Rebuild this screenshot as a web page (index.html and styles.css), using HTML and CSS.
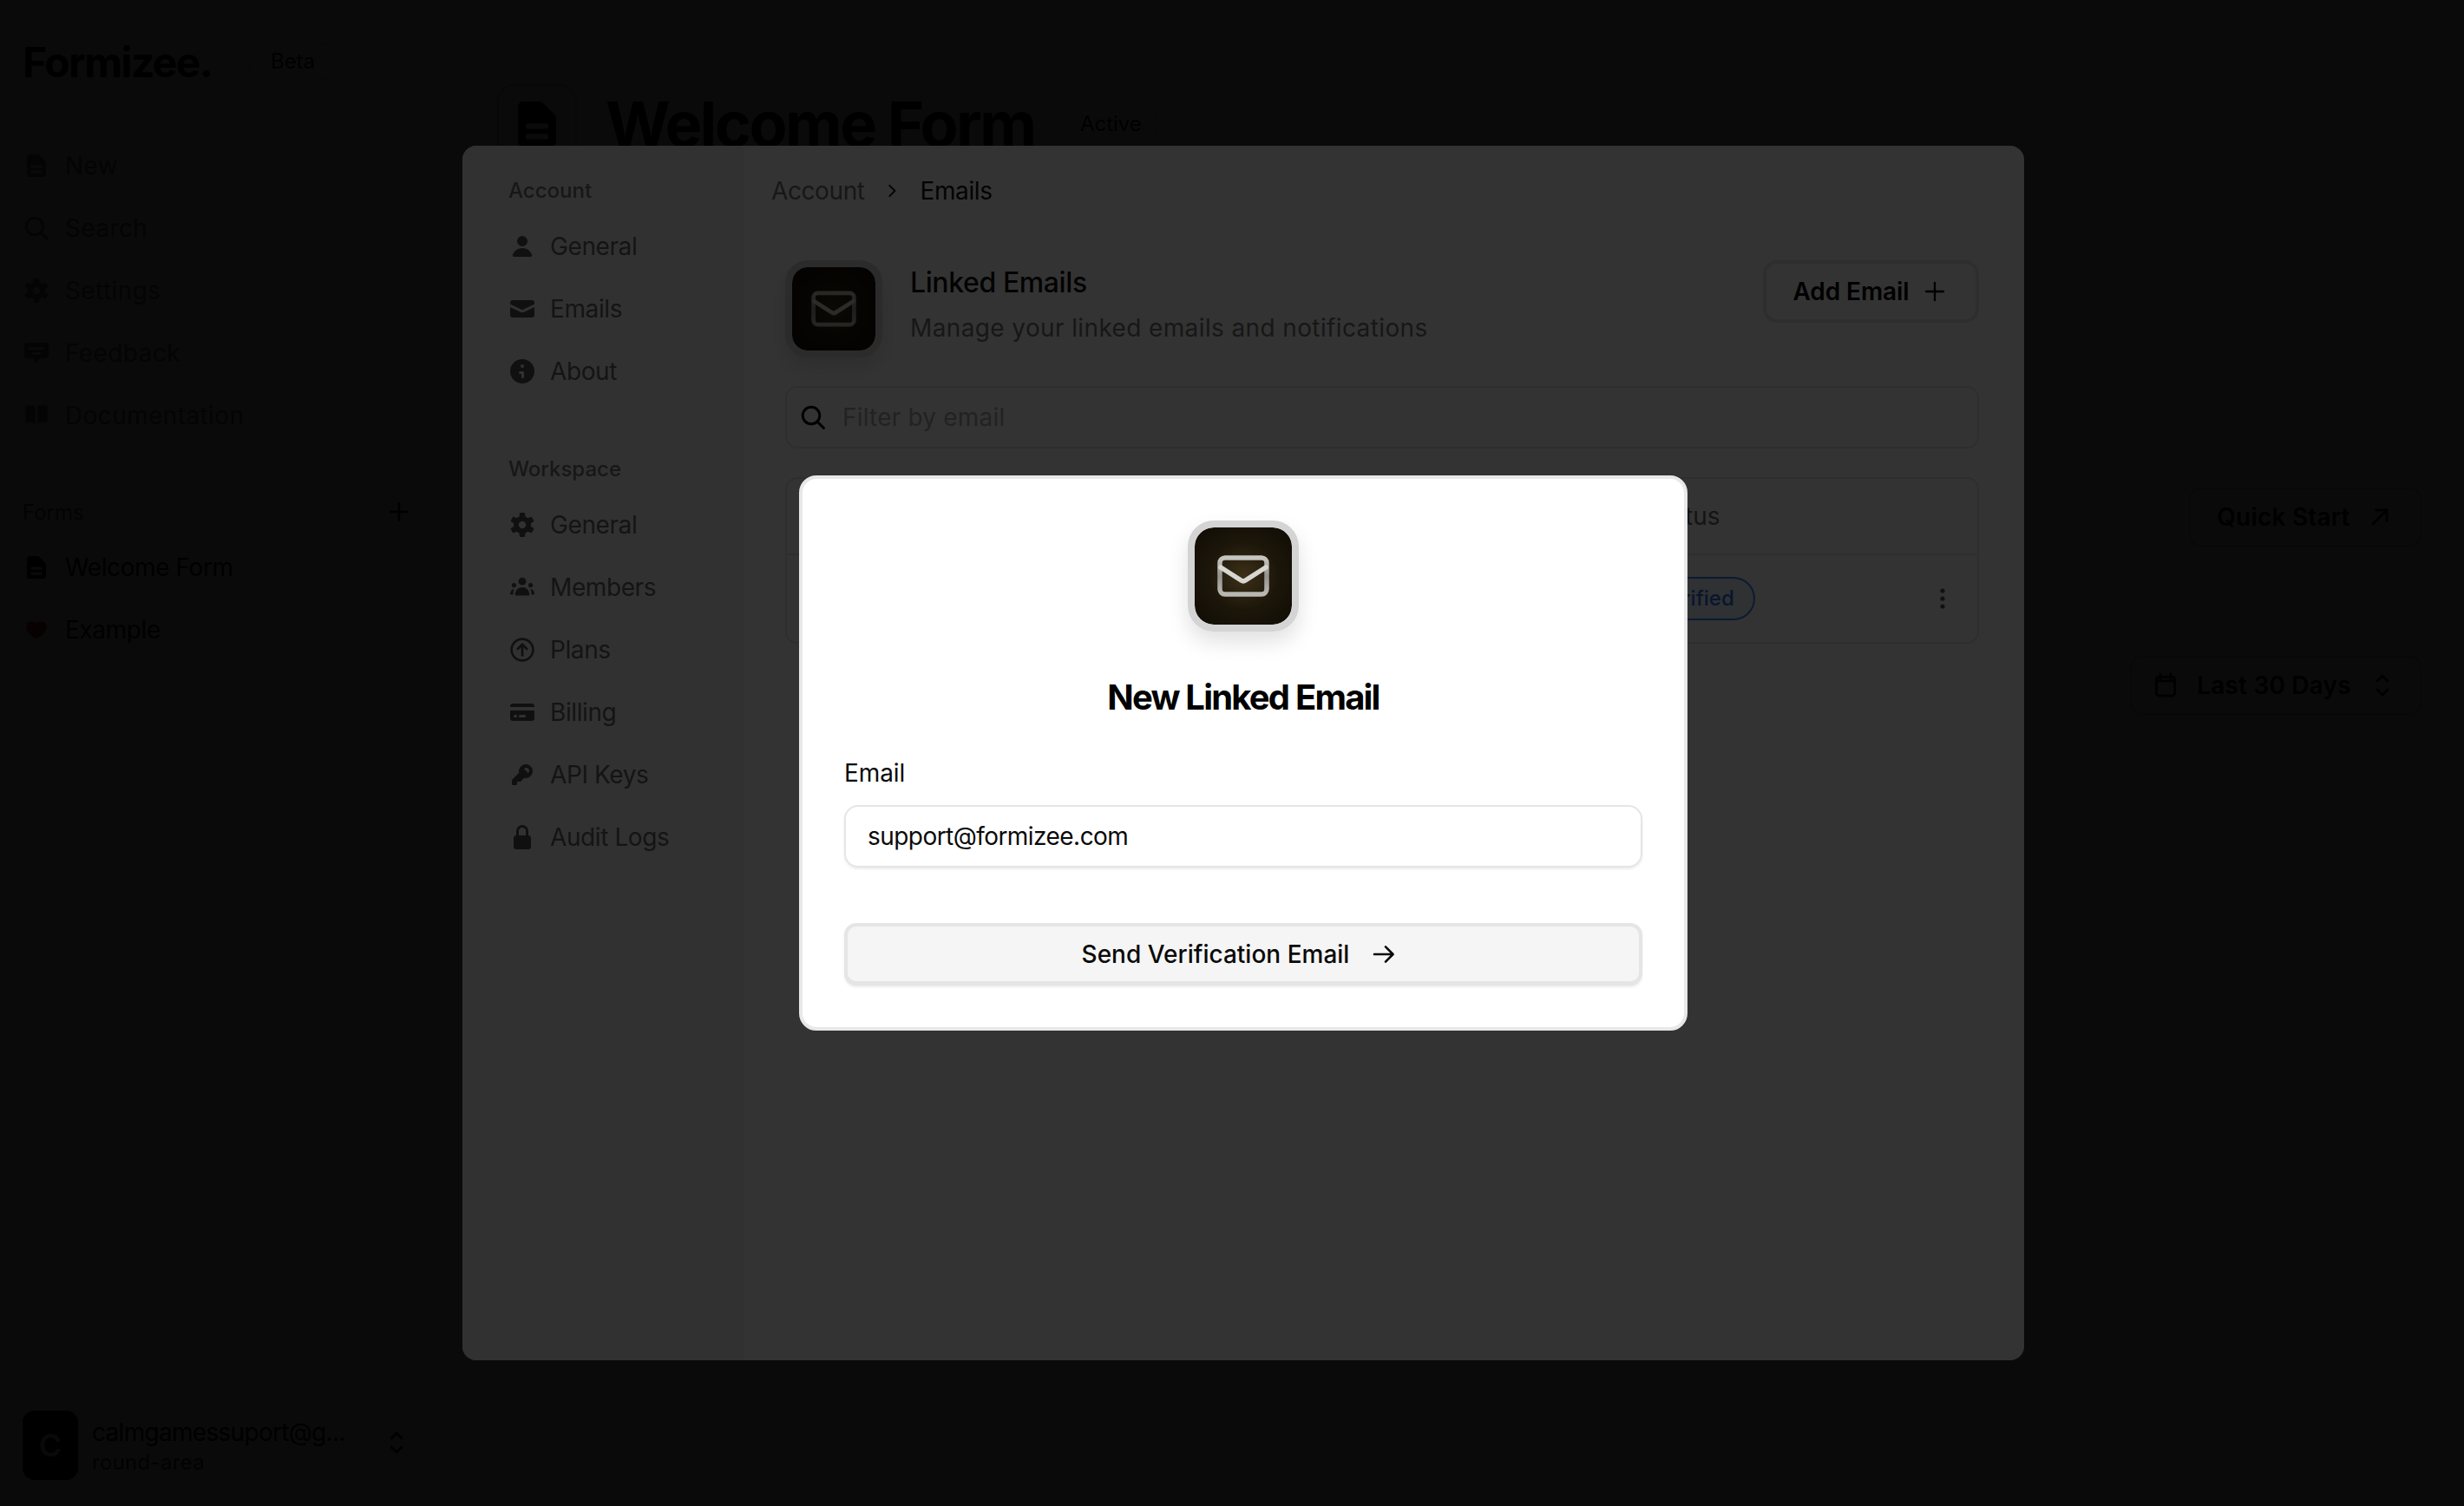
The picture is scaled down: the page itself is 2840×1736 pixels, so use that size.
FILE: index.html
```html
<!DOCTYPE html>
<html lang="en">
<head>
<meta charset="utf-8">
<title>Formizee</title>
<link rel="stylesheet" href="styles.css">
</head>
<body>
<svg class="defs" aria-hidden="true">
  <defs>
    <linearGradient id="env-metal" x1="0" y1="0" x2="0" y2="1"><stop offset="0" stop-color="#c8c6c1"/><stop offset=".5" stop-color="#94928c"/><stop offset="1" stop-color="#bab8b2"/></linearGradient>
    <filter id="env-soft" x="-10%" y="-10%" width="120%" height="120%"><feGaussianBlur stdDeviation=".5"/></filter>
  </defs>
  <symbol id="i-doc" viewBox="0 0 16 16"><path fill-rule="evenodd" d="M4 1.5A1.5 1.5 0 0 0 2.500 3v10A1.500 1.500 0 0 0 4 14.500h8a1.500 1.500 0 0 0 1.500-1.500V6.400c0-.4-.15-.78-.42-1.060L9.700 1.950A1.500 1.500 0 0 0 8.600 1.500H4Zm1.500 6.300a.8.8 0 0 0 0 1.600h5a.8.8 0 0 0 0-1.600h-5Zm0 3a.8.8 0 0 0 0 1.600h5a.8.8 0 0 0 0-1.600h-5Z"/></symbol>
  <symbol id="i-search" viewBox="0 0 16 16"><circle cx="7" cy="7" r="4.900" fill="none" stroke="currentColor" stroke-width="1.500"/><path d="m10.600 10.600 3.600 3.600" fill="none" stroke="currentColor" stroke-width="1.500" stroke-linecap="round"/></symbol>
  <symbol id="i-cog" viewBox="0 0 16 16"><path fill-rule="evenodd" d="M6.455 1.45A.5.5 0 0 1 6.952 1h2.096a.5.5 0 0 1 .497.45l.186 1.858a4.996 4.996 0 0 1 1.466.848l1.703-.769a.5.5 0 0 1 .639.206l1.047 1.814a.5.5 0 0 1-.14.656l-1.517 1.09a5.026 5.026 0 0 1 0 1.694l1.516 1.09a.5.5 0 0 1 .141.656l-1.047 1.814a.5.5 0 0 1-.639.206l-1.703-.768c-.433.36-.928.649-1.466.847l-.186 1.858a.5.5 0 0 1-.497.45H6.952a.5.5 0 0 1-.497-.45l-.186-1.858a4.993 4.993 0 0 1-1.466-.848l-1.703.769a.5.5 0 0 1-.639-.206l-1.047-1.814a.5.5 0 0 1 .14-.656l1.517-1.09a5.033 5.033 0 0 1 0-1.694l-1.516-1.09a.5.5 0 0 1-.141-.656L2.46 3.593a.5.5 0 0 1 .639-.206l1.703.769c.433-.36.928-.65 1.466-.848l.186-1.858Zm-.177 7.567-.022-.037a2 2 0 0 1 3.466-1.997l.022.037a2 2 0 0 1-3.466 1.997Z"/></symbol>
  <symbol id="i-chat" viewBox="0 0 16 16"><path fill-rule="evenodd" d="M2.500 2A1.500 1.500 0 0 0 1 3.500v6A1.500 1.500 0 0 0 2.500 11H6l1.500 2.600c.2.4.8.4 1 0L10 11h3.500A1.500 1.500 0 0 0 15 9.500v-6A1.500 1.500 0 0 0 13.500 2h-11ZM4 4.600a.7.7 0 0 0 0 1.400h8a.7.7 0 0 0 0-1.400H4Zm2 2.900a.7.7 0 0 0 0 1.400h4a.7.7 0 0 0 0-1.400H6Z"/></symbol>
  <symbol id="i-book" viewBox="0 0 16 16"><path d="M2.500 2.300h3.700c.7 0 1.100.4 1.100 1.100v9.500c-.9-.6-1.800-.9-3-.9H2.500a.8.8 0 0 1-.8-.8V3.100c0-.5.3-.8.8-.8Zm11 0H9.800c-.7 0-1.100.4-1.100 1.100v9.500c.9-.6 1.800-.9 3-.9h1.800a.8.8 0 0 0 .8-.8V3.100c0-.5-.3-.8-.8-.8Z"/></symbol>
  <symbol id="i-heart" viewBox="0 0 16 16"><path d="M2 6.342a3.375 3.375 0 0 1 6-2.088 3.375 3.375 0 0 1 5.997 2.26c-.063 2.134-1.618 3.76-2.955 4.784a14.437 14.437 0 0 1-2.676 1.61c-.02.01-.038.017-.05.022l-.014.006-.004.002h-.002a.75.75 0 0 1-.592.001h-.002l-.004-.003-.015-.006a5.528 5.528 0 0 1-.232-.107 14.159 14.159 0 0 1-2.535-1.557C3.564 10.22 1.999 8.558 1.999 6.38L2 6.342Z"/></symbol>
  <symbol id="i-user" viewBox="0 0 16 16"><path d="M8 8a3 3 0 1 0 0-6 3 3 0 0 0 0 6ZM12.735 14c.618 0 1.093-.561.872-1.139a6.002 6.002 0 0 0-11.215 0c-.22.578.254 1.139.872 1.139h9.470Z"/></symbol>
  <symbol id="i-mail" viewBox="0 0 16 16"><path d="M2.500 3A1.500 1.500 0 0 0 1 4.500v.793c.026.009.051.02.076.032L7.674 8.510c.206.1.446.1.652 0l6.598-3.185A.755.755 0 0 1 15 5.293V4.500A1.500 1.500 0 0 0 13.500 3h-11Z"/><path d="M15 6.954 8.978 9.860a2.250 2.250 0 0 1-1.956 0L1 6.954V11.500A1.500 1.500 0 0 0 2.500 13h11a1.500 1.500 0 0 0 1.500-1.500V6.954Z"/></symbol>
  <symbol id="i-info" viewBox="0 0 16 16"><path fill-rule="evenodd" d="M15 8A7 7 0 1 1 1 8a7 7 0 0 1 14 0ZM9 5a1 1 0 1 1-2 0 1 1 0 0 1 2 0ZM6.750 8a.75.75 0 0 0 0 1.500h.75v1.750a.75.75 0 0 0 1.500 0v-2.500A.75.75 0 0 0 8.250 8h-1.500Z"/></symbol>
  <symbol id="i-team" viewBox="0 0 16 16"><circle cx="8" cy="4.600" r="2.200"/><circle cx="3.200" cy="6.800" r="1.300"/><circle cx="12.800" cy="6.800" r="1.300"/><path d="M3.900 12.200c0-2.500 1.800-4.200 4.100-4.200s4.100 1.700 4.100 4.200c0 .4-.3.6-.6.6H4.500c-.3 0-.6-.2-.6-.6ZM2.800 9c-.9.3-1.600 1.200-1.800 2.500-.1.400.2.700.5.700h1.200c0-1.200.2-2.200.6-3.200H2.800Zm10.400 0c.9.3 1.600 1.200 1.800 2.500.1.400-.2.700-.5.700h-1.200c0-1.200-.2-2.200-.6-3.200h.5Z"/></symbol>
  <symbol id="i-up" viewBox="0 0 16 16"><circle cx="8" cy="8" r="6.200" fill="none" stroke="currentColor" stroke-width="1.300"/><path d="M8 11.300V5M5.400 7.500 8 4.900l2.600 2.600" fill="none" stroke="currentColor" stroke-width="1.400" stroke-linecap="round" stroke-linejoin="round"/></symbol>
  <symbol id="i-card" viewBox="0 0 16 16"><path d="M2.500 3A1.500 1.500 0 0 0 1 4.500V5h14v-.5A1.500 1.500 0 0 0 13.500 3h-11Z"/><path fill-rule="evenodd" d="M15 7H1v4.500A1.500 1.500 0 0 0 2.500 13h11a1.500 1.500 0 0 0 1.500-1.500V7ZM3 10.250a.75.75 0 0 1 .75-.75h.5a.75.75 0 0 1 0 1.500h-.5a.75.75 0 0 1-.75-.75Zm3.750-.75a.75.75 0 0 0 0 1.500h2.500a.75.75 0 0 0 0-1.500h-2.500Z"/></symbol>
  <symbol id="i-key" viewBox="0 0 16 16"><path fill-rule="evenodd" d="M14 6a4 4 0 0 1-4.899 3.899l-1.955 1.955a.5.5 0 0 1-.353.146H5v1.500a.5.5 0 0 1-.5.5h-2a.5.5 0 0 1-.5-.5v-2.293a.5.5 0 0 1 .146-.353l3.955-3.955A4 4 0 1 1 14 6Zm-4-2a.75.75 0 0 0 0 1.500.5.5 0 0 1 .5.5.75.75 0 0 0 1.500 0 2 2 0 0 0-2-2Z"/></symbol>
  <symbol id="i-lock" viewBox="0 0 16 16"><path fill-rule="evenodd" d="M8 1a3.500 3.500 0 0 0-3.500 3.500V7A1.500 1.500 0 0 0 3 8.500v5A1.500 1.500 0 0 0 4.500 15h7a1.500 1.500 0 0 0 1.500-1.500v-5A1.500 1.500 0 0 0 11.500 7V4.500A3.500 3.500 0 0 0 8 1Zm2 6V4.500a2 2 0 1 0-4 0V7h4Z"/></symbol>
  <symbol id="i-plus" viewBox="0 0 16 16"><path d="M8 3v10M3 8h10" fill="none" stroke="currentColor" stroke-width="1.200" stroke-linecap="round"/></symbol>
  <symbol id="i-arrow" viewBox="0 0 16 16"><path d="M2.500 8h10.600M9 3.700 13.300 8 9 12.300" fill="none" stroke="currentColor" stroke-width="1.300" stroke-linecap="round" stroke-linejoin="round"/></symbol>
  <symbol id="i-ne" viewBox="0 0 16 16"><path d="M4 12 12 4M5.800 4H12v6.200" fill="none" stroke="currentColor" stroke-width="1.400" stroke-linecap="round" stroke-linejoin="round"/></symbol>
  <symbol id="i-updown" viewBox="0 0 16 16"><path d="M5 5.500 8 2.500l3 3M5 10.500l3 3 3-3" fill="none" stroke="currentColor" stroke-width="1.400" stroke-linecap="round" stroke-linejoin="round"/></symbol>
  <symbol id="i-cal" viewBox="0 0 16 16"><rect x="2.700" y="3.200" width="10.600" height="10.800" rx="1.500" fill="none" stroke="currentColor" stroke-width="1.400"/><path d="M5 1.600v2.500M11 1.600v2.500M2.700 5.400h10.600" fill="none" stroke="currentColor" stroke-width="1.400" stroke-linecap="round"/></symbol>
  <symbol id="i-chev" viewBox="0 0 16 16"><path d="m6 3.500 4.500 4.500L6 12.500" fill="none" stroke="currentColor" stroke-width="1.400" stroke-linecap="round" stroke-linejoin="round"/></symbol>
  <symbol id="i-dots" viewBox="0 0 16 16"><circle cx="8" cy="3.500" r="1.300"/><circle cx="8" cy="8" r="1.300"/><circle cx="8" cy="12.500" r="1.300"/></symbol>
  <symbol id="i-env" viewBox="0 0 60 48"><g filter="url(#env-soft)"><rect x="3" y="3" width="54" height="42" rx="6" fill="none" stroke="url(#env-metal)" stroke-width="5.500"/><path d="M4 14 27.500 29a4.500 4.500 0 0 0 5 0L56 14" fill="none" stroke="#d8d6d0" stroke-width="5.500" stroke-linecap="round"/></g></symbol>
</svg>

<div class="page">
  <aside class="side">
    <div class="brand"><span class="logo">Formizee.</span><span class="beta">Beta</span></div>
    <nav class="side-nav">
      <a class="side-link"><svg class="ico"><use href="#i-doc"/></svg>New</a>
      <a class="side-link"><svg class="ico"><use href="#i-search"/></svg>Search</a>
      <a class="side-link"><svg class="ico"><use href="#i-cog"/></svg>Settings</a>
      <a class="side-link"><svg class="ico"><use href="#i-chat"/></svg>Feedback</a>
      <a class="side-link"><svg class="ico"><use href="#i-book"/></svg>Documentation</a>
    </nav>
    <div class="forms-head"><span>Forms</span><svg class="ico"><use href="#i-plus"/></svg></div>
    <a class="side-link form-link"><svg class="ico"><use href="#i-doc"/></svg>Welcome Form</a>
    <a class="side-link form-link"><svg class="ico heart"><use href="#i-heart"/></svg>Example</a>
    <div class="account">
      <span class="avatar">C</span>
      <span class="account-text"><span class="account-name">calmgamessuport@g...</span><span class="account-team">round-area</span></span>
      <svg class="ico account-chev"><use href="#i-updown"/></svg>
    </div>
  </aside>
  <main class="main">
    <header class="form-head">
      <span class="form-tile"><svg class="form-ico"><use href="#i-doc"/></svg></span>
      <h1 class="form-title">Welcome Form</h1>
      <span class="active">Active</span>
    </header>
    <div class="tools">
      <a class="tool quick">Quick Start<svg class="ico"><use href="#i-ne"/></svg></a>
      <a class="tool range"><svg class="ico"><use href="#i-cal"/></svg>Last 30 Days<svg class="ico"><use href="#i-updown"/></svg></a>
    </div>
  </main>
</div>

<div class="scrim"></div>

<section class="settings">
  <aside class="set-side">
    <div class="set-label">Account</div>
    <a class="set-link"><svg class="ico"><use href="#i-user"/></svg>General</a>
    <a class="set-link"><svg class="ico"><use href="#i-mail"/></svg>Emails</a>
    <a class="set-link"><svg class="ico"><use href="#i-info"/></svg>About</a>
    <div class="set-label second">Workspace</div>
    <a class="set-link"><svg class="ico"><use href="#i-cog"/></svg>General</a>
    <a class="set-link"><svg class="ico"><use href="#i-team"/></svg>Members</a>
    <a class="set-link"><svg class="ico"><use href="#i-up"/></svg>Plans</a>
    <a class="set-link"><svg class="ico"><use href="#i-card"/></svg>Billing</a>
    <a class="set-link"><svg class="ico"><use href="#i-key"/></svg>API Keys</a>
    <a class="set-link"><svg class="ico"><use href="#i-lock"/></svg>Audit Logs</a>
  </aside>
  <div class="set-main">
    <div class="crumbs"><span>Account</span><svg class="crumb-chev"><use href="#i-chev"/></svg><span class="crumb-now">Emails</span></div>
    <div class="set-body">
      <div class="emails-head">
        <span class="tile tile-sm"><svg class="env-sm"><use href="#i-env"/></svg></span>
        <div class="emails-text">
          <h2 class="emails-title">Linked Emails</h2>
          <p class="emails-sub">Manage your linked emails and notifications</p>
        </div>
        <button class="add-btn">Add Email<svg class="ico"><use href="#i-plus"/></svg></button>
      </div>
      <div class="filter"><svg class="filter-ico"><use href="#i-search"/></svg><span>Filter by email</span></div>
      <div class="table">
        <div class="table-head"><span class="col-status">Status</span></div>
        <div class="table-row">
          <span class="col-status"><span class="badge">Verified</span></span>
          <svg class="dots"><use href="#i-dots"/></svg>
        </div>
      </div>
    </div>
  </div>
</section>

<div class="scrim"></div>

<section class="dialog">
  <span class="tile tile-lg"><svg class="env-lg"><use href="#i-env"/></svg></span>
  <h2 class="dialog-title">New Linked Email</h2>
  <label class="dialog-label">Email</label>
  <div class="dialog-input">support@formizee.com</div>
  <button class="dialog-btn">Send Verification Email<svg class="ico"><use href="#i-arrow"/></svg></button>
</section>
</body>
</html>
```
FILE: styles.css
```css
* { box-sizing: border-box; }
html, body { margin: 0; height: 100%; }
body {
  position: relative;
  width: 2840px;
  height: 1736px;
  overflow: hidden;
  background: #fff;
  font-family: Inter, "Liberation Sans", sans-serif;
  color: #000;
}
.defs { position: absolute; width: 0; height: 0; }
.ico { width: 32px; height: 32px; fill: currentColor; flex: none; }
h1, h2, p { margin: 0; }
button { font-family: inherit; }

/* underlying page */
.page { display: flex; height: 1736px; }
.side { width: 540px; flex: none; display: flex; flex-direction: column; padding: 48px 0 30px 26px; }
.brand { display: flex; align-items: center; height: 46px; }
.logo { font-size: 48px; font-weight: 700; letter-spacing: -1.6px; width: 259px; flex: none; }
.beta { width: 105px; height: 44px; border: 2px solid #e5e5e5; border-radius: 22px; font-size: 24px; line-height: 40px; text-align: center; color: #111; }
.side-nav { margin-top: 61px; display: flex; flex-direction: column; }
.side-link { display: flex; align-items: center; gap: 17px; height: 72px; font-size: 28px; letter-spacing: .4px; color: #737373; }
.forms-head { display: flex; align-items: center; justify-content: space-between; width: 450px; height: 32px; margin-top: 59px; font-size: 24px; color: #555; }
.forms-head .ico { color: #111; }
.form-link { color: #171717; letter-spacing: -.4px; }
.forms-head + .form-link { margin-top: 12px; }
.heart { color: #dc2626; }
.account { margin-top: auto; display: flex; align-items: center; }
.avatar { width: 64px; height: 80px; border-radius: 14px; background: #000; color: #e0e0e0; display: flex; align-items: center; justify-content: center; font-size: 36px; font-weight: 600; flex: none; }
.account-text { display: flex; flex-direction: column; margin-left: 16px; width: 335px; padding-top: 4px; }
.account-name { font-size: 28px; line-height: 36px; color: #000; letter-spacing: -.7px; }
.account-team { font-size: 24px; line-height: 34px; color: #333; letter-spacing: .3px; }
.account-chev { margin-top: -6px; }

.main { flex: 1; padding: 97px 49px 0 33px; }
.form-head { display: flex; align-items: center; }
.form-tile { width: 92px; height: 92px; border: 2px solid #d4d4d4; border-radius: 20px; display: flex; align-items: center; justify-content: center; flex: none; }
.form-ico { width: 64px; height: 64px; fill: #000; }
.form-title { margin-left: 33px; font-size: 72px; font-weight: 700; letter-spacing: -2.6px; line-height: 92px; }
.active { margin-left: 34px; width: 108px; height: 56px; border: 2px solid #c8e6d2; border-radius: 28px; font-size: 24px; line-height: 52px; text-align: center; color: #000; }
.tools { margin-top: 373px; display: flex; flex-direction: column; align-items: flex-end; gap: 126px; }
.tool { display: flex; align-items: center; justify-content: center; height: 68px; border: 2px solid #cfcfcf; border-radius: 14px; font-size: 28px; font-weight: 600; letter-spacing: .2px; }
.quick { width: 268px; gap: 18px; }
.range { width: 336px; gap: 20px; padding-right: 4px; }

.scrim { position: absolute; inset: 0; background: rgba(0, 0, 0, .8); }

/* settings window */
.settings { position: absolute; left: 533px; top: 168px; width: 1800px; height: 1400px; border-radius: 16px; background: #fff; display: flex; overflow: hidden; }
.set-side { width: 324px; flex: none; background: #f6f6f6; padding: 36px 0 0 53px; }
.set-label { font-size: 24px; line-height: 32px; font-weight: 500; color: #737373; margin-bottom: 12px; }
.set-label.second { margin-top: 61px; }
.set-link { display: flex; align-items: center; gap: 16px; height: 72px; font-size: 28px; color: #666; letter-spacing: -.4px; }
.set-link .ico { color: #525252; }
.set-main { flex: 1; padding: 36px 52px 0 32px; }
.crumbs { display: flex; align-items: center; height: 32px; font-size: 28px; color: #737373; letter-spacing: -.4px; }
.crumb-chev { width: 22px; height: 22px; margin: 0 22px 0 20px; color: #111; }
.crumb-now { color: #111; }
.set-body { margin-left: 16px; }
.emails-head { display: flex; align-items: flex-start; margin-top: 64px; }
.tile { display: flex; align-items: center; justify-content: center; background: radial-gradient(circle, #3d3018 0%, #1c160a 50%, #100c04 100%); background-clip: padding-box; border: 8px solid #d4d4d4; box-shadow: 0 12px 24px rgba(0, 0, 0, .12); flex: none; }
.tile-sm { width: 112px; height: 112px; border-radius: 26px; }
.tile-lg { width: 128px; height: 128px; border-radius: 30px; }
.env-sm { width: 52px; height: 42px; }
.env-lg { width: 60px; height: 48px; }
.emails-text { margin-left: 32px; flex: 1; padding-top: 2px; }
.emails-title { font-size: 32px; line-height: 48px; font-weight: 500; color: #111; letter-spacing: -.4px; }
.emails-sub { font-size: 28px; line-height: 40px; margin-top: 8px; color: #737373; letter-spacing: .38px; }
.add-btn { display: flex; align-items: center; justify-content: center; gap: 14px; width: 249px; height: 72px; background: #fff; border: 4px solid #e5e5e5; border-radius: 16px; font-size: 28px; font-weight: 600; letter-spacing: -.1px; color: #000; padding: 0; }
.filter { display: flex; align-items: center; height: 72px; margin-top: 33px; border: 2px solid #e5e5e5; border-radius: 14px; padding-left: 14px; font-size: 28px; color: #aaa; gap: 18px; letter-spacing: .2px; }
.filter-ico { width: 32px; height: 32px; color: #000; }
.table { margin-top: 33px; height: 192px; border: 2px solid #e5e5e5; border-radius: 14px; }
.table-head { height: 88px; border-bottom: 2px solid #e5e5e5; display: flex; align-items: center; font-size: 28px; color: #666; }
.col-status { margin-left: 992px; }
.table-row { height: 100px; display: flex; align-items: center; }
.table-row .col-status { margin-left: 978px; }
.badge { display: block; width: 138px; height: 50px; border: 2px solid #3b82f6; border-radius: 25px; background: #eef5ff; color: #2b6fe0; font-size: 24px; line-height: 46px; text-align: center; font-weight: 500; }
.dots { width: 32px; height: 32px; margin-left: auto; margin-right: 24px; fill: #555; }

/* dialog */
.dialog { position: absolute; left: 921px; top: 548px; width: 1024px; height: 640px; background: #fff; border: 4px solid #e8e8e8; border-radius: 20px; padding: 48px; display: flex; flex-direction: column; }
.tile-lg { align-self: center; }
.dialog-title { margin-top: 52px; font-size: 40px; line-height: 48px; font-weight: 700; letter-spacing: -1.8px; text-align: center; }
.dialog-label { margin-top: 47px; font-size: 28px; line-height: 32px; color: #0a0a0a; letter-spacing: -.1px; }
.dialog-input { margin-top: 21px; height: 72px; border: 2px solid #e5e5e5; border-radius: 16px; box-shadow: 0 2px 3px rgba(0, 0, 0, .08); padding-left: 25px; font-size: 28px; line-height: 68px; color: #0a0a0a; letter-spacing: -.55px; }
.dialog-btn { margin-top: 64px; height: 72px; display: flex; align-items: center; justify-content: center; gap: 24px; background: #f5f5f5; border: 4px solid #e5e5e5; border-bottom-width: 5px; border-radius: 14px; box-shadow: 0 2px 3px rgba(0, 0, 0, .08); font-size: 28px; font-weight: 500; color: #0a0a0a; padding: 0 8px 0 0; }
```
